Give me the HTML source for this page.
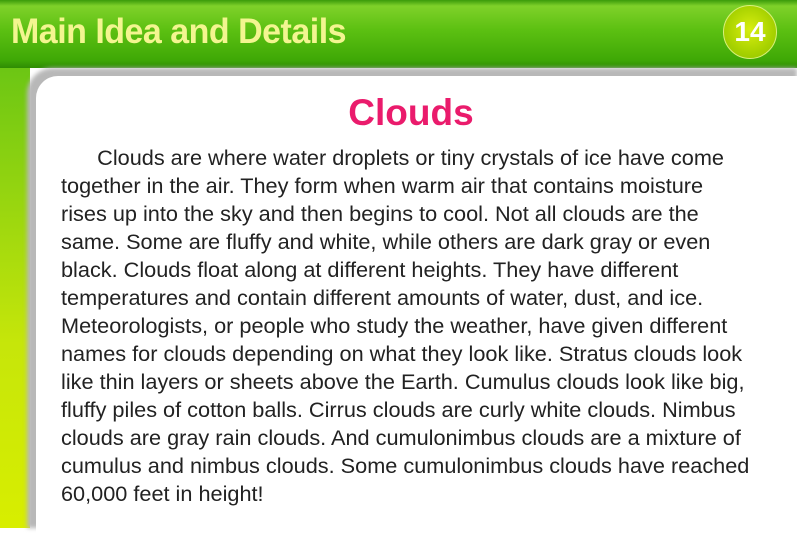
<!DOCTYPE html>
<html><head><meta charset="utf-8"><style>
body{margin:0;width:797px;height:538px;overflow:hidden;background:#fff;position:relative;font-family:"Liberation Sans",sans-serif}
.hdr{position:absolute;left:0;top:0;width:797px;height:68px;background:linear-gradient(#3a9a0a 0,#7fd12a 6px,#5cc012 30px,#3fa806 60px,#2f8c04 68px)}
.hdr h1{position:absolute;left:11px;top:12px;margin:0;font-size:35px;font-weight:bold;color:#f3f590;transform:scaleX(.97);transform-origin:left;letter-spacing:-.5px}
.num{position:absolute;left:723px;top:5px;width:52px;height:52px;border-radius:50%;background:radial-gradient(circle at 50% 45%,#d8ee10,#a8d200 60%,#8cc000);border:1.5px solid #d9f07a;color:#fff;font-weight:bold;font-size:28px;text-align:center;line-height:52px}
.strip{position:absolute;left:0;top:68px;width:30px;height:460px;background:linear-gradient(#6cc614,#c6e60a 60%,#d8ee00)}
.shadow{position:absolute;left:27px;top:68px;width:770px;height:460px;background:#b8b8b8;border-top-left-radius:26px;filter:blur(2px)}
.panel{position:absolute;left:36px;top:76px;width:770px;height:460px;background:#fff;border-top-left-radius:22px}
.title{position:absolute;left:0;width:822px;top:92px;text-align:center;color:#ea1b6c;font-weight:bold;font-size:37px}
.txt{position:absolute;left:61px;top:144px;font-size:21.7px;line-height:28px;color:#222;white-space:pre}
</style></head><body>
<div class="hdr"><h1>Main Idea and Details</h1><div class="num">14</div></div>
<div class="strip"></div><div class="shadow"></div><div class="panel"></div>
<div class="title">Clouds</div>
<div class="txt">      Clouds are where water droplets or tiny crystals of ice have come
together in the air. They form when warm air that contains moisture
rises up into the sky and then begins to cool. Not all clouds are the
same. Some are fluffy and white, while others are dark gray or even
black. Clouds float along at different heights. They have different
temperatures and contain different amounts of water, dust, and ice.
Meteorologists, or people who study the weather, have given different
names for clouds depending on what they look like. Stratus clouds look
like thin layers or sheets above the Earth. Cumulus clouds look like big,
fluffy piles of cotton balls. Cirrus clouds are curly white clouds. Nimbus
clouds are gray rain clouds. And cumulonimbus clouds are a mixture of
cumulus and nimbus clouds. Some cumulonimbus clouds have reached
60,000 feet in height!</div>
</body></html>
